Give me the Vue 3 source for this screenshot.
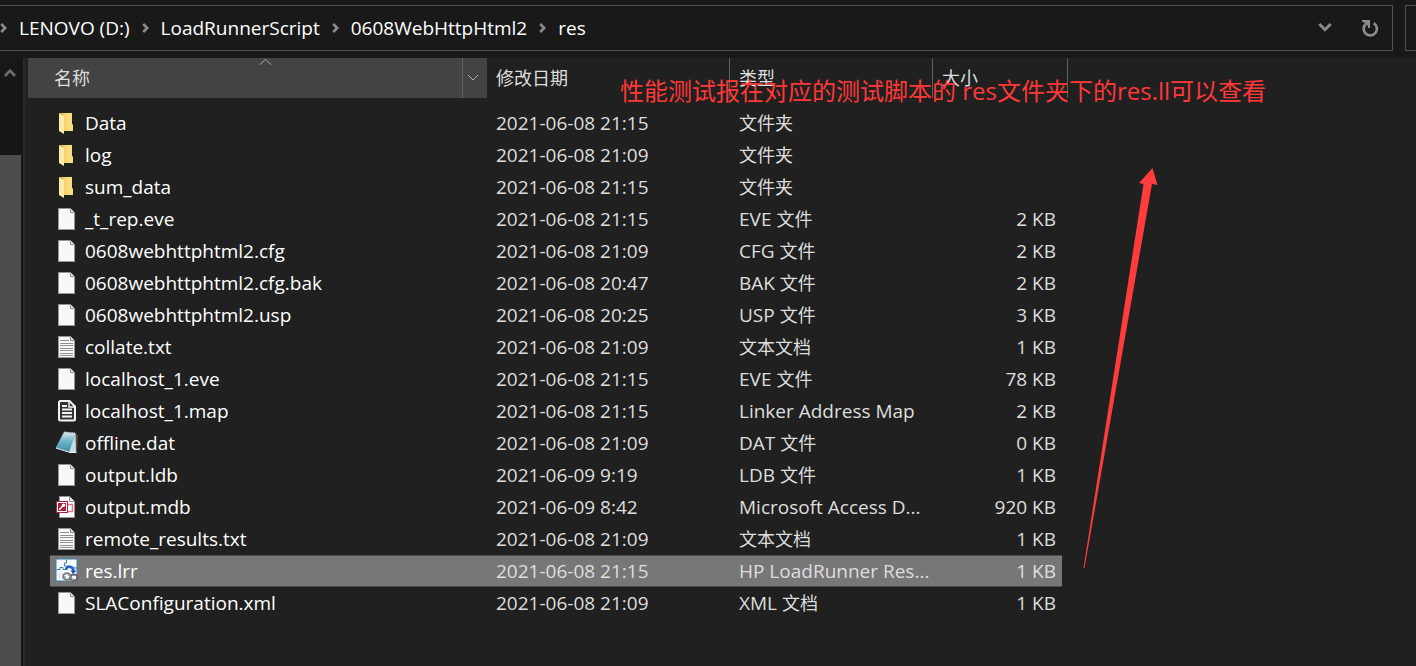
<script setup>
import { ref } from 'vue'

const crumbs = ['LENOVO (D:)', 'LoadRunnerScript', '0608WebHttpHtml2', 'res']

const files = [
  { icon: 'folder', name: 'Data', date: '2021-06-08 21:15', kind: '', cjk: '文件夹', size: '' },
  { icon: 'folder', name: 'log', date: '2021-06-08 21:09', kind: '', cjk: '文件夹', size: '' },
  { icon: 'folder', name: 'sum_data', date: '2021-06-08 21:15', kind: '', cjk: '文件夹', size: '' },
  { icon: 'file', name: '_t_rep.eve', date: '2021-06-08 21:15', kind: 'EVE ', cjk: '文件', size: '2 KB' },
  { icon: 'file', name: '0608webhttphtml2.cfg', date: '2021-06-08 21:09', kind: 'CFG ', cjk: '文件', size: '2 KB' },
  { icon: 'file', name: '0608webhttphtml2.cfg.bak', date: '2021-06-08 20:47', kind: 'BAK ', cjk: '文件', size: '2 KB' },
  { icon: 'file', name: '0608webhttphtml2.usp', date: '2021-06-08 20:25', kind: 'USP ', cjk: '文件', size: '3 KB' },
  { icon: 'text', name: 'collate.txt', date: '2021-06-08 21:09', kind: '', cjk: '文本文档', size: '1 KB' },
  { icon: 'file', name: 'localhost_1.eve', date: '2021-06-08 21:15', kind: 'EVE ', cjk: '文件', size: '78 KB' },
  { icon: 'map', name: 'localhost_1.map', date: '2021-06-08 21:15', kind: 'Linker Address Map', cjk: '', size: '2 KB' },
  { icon: 'dat', name: 'offline.dat', date: '2021-06-08 21:09', kind: 'DAT ', cjk: '文件', size: '0 KB' },
  { icon: 'file', name: 'output.ldb', date: '2021-06-09 9:19', kind: 'LDB ', cjk: '文件', size: '1 KB' },
  { icon: 'mdb', name: 'output.mdb', date: '2021-06-09 8:42', kind: 'Microsoft Access D...', cjk: '', size: '920 KB' },
  { icon: 'text', name: 'remote_results.txt', date: '2021-06-08 21:09', kind: '', cjk: '文本文档', size: '1 KB' },
  { icon: 'lrr', name: 'res.lrr', date: '2021-06-08 21:15', kind: 'HP LoadRunner Res...', cjk: '', size: '1 KB' },
  { icon: 'file', name: 'SLAConfiguration.xml', date: '2021-06-08 21:09', kind: 'XML ', cjk: '文档', size: '1 KB' }
]

const selected = ref('res.lrr')
</script>

<template>
  <div class="explorer">
    <header class="top">
      <nav class="address" aria-label="路径">
        <template v-for="c in crumbs" :key="c">
          <svg class="sep" width="7" height="10" viewBox="0 0 7 10"><path d="M1.2 1L5.2 5L1.2 9" /></svg>
          <button class="crumb" type="button">{{ c }}</button>
        </template>
        <span class="grow"></span>
        <button class="tool" type="button" aria-label="历史记录">
          <svg width="14" height="10" viewBox="0 0 14 10"><path d="M1.3 1L7 6.700L12.700 1" fill="none" stroke="#8b8b8b" stroke-width="3" /></svg>
        </button>
        <button class="tool refresh" type="button" aria-label="刷新">
          <svg width="18" height="18" viewBox="0 0 18 18">
            <path d="M12.700 4.200A6.600 6.600 0 1 1 4.800 5" fill="none" stroke="#8b8b8b" stroke-width="2.700" />
            <path d="M1 2H8V9" fill="none" stroke="#8b8b8b" stroke-width="2" />
            <path d="M2.500 3H7V7Z" fill="#8b8b8b" />
          </svg>
        </button>
      </nav>
      <div class="search"></div>
    </header>

    <div class="body">
      <aside class="track">
        <button class="up" type="button" aria-label="向上滚动">
          <svg width="12" height="10" viewBox="0 0 12 10"><path d="M1 8L6 2.600L11 8" fill="none" stroke="#6e6e6e" stroke-width="2.600" /></svg>
        </button>
        <div class="thumb"></div>
      </aside>

      <main class="pane">
        <table>
          <colgroup>
            <col class="w-edge" /><col class="w-name" /><col class="w-date" />
            <col class="w-type" /><col class="w-size" /><col class="w-tail" />
          </colgroup>
          <thead>
            <tr>
              <th class="name-head" colspan="2">
                <div class="sorted">
                  <button class="head" type="button">名称</button>
                  <svg class="asc" width="13" height="8" viewBox="0 0 13 8"><path d="M1 6.700L6.500 1.200L12 6.700" /></svg>
                  <button class="filter" type="button" aria-label="筛选">
                    <svg width="12" height="8" viewBox="0 0 12 8"><path d="M1 1L6 6L11 1" /></svg>
                  </button>
                </div>
              </th>
              <th><button class="head" type="button">修改日期</button></th>
              <th><button class="head" type="button">类型</button></th>
              <th colspan="2"><button class="head" type="button">大小</button></th>
            </tr>
          </thead>
          <tbody>
            <tr v-for="f in files" :key="f.name" :class="{ on: f.name === selected }" @click="selected = f.name">
              <td class="blank"></td>
              <td class="name">
                <div class="entry">
                  <svg v-if="f.icon === 'folder'" width="24" height="24" viewBox="0 -1 24 24">
                    <path d="M7 1H17V12L18 13V19H7Z" fill="#f7d271" />
                    <path d="M12 1H17V12L18 13V19H12Z" fill="#fbdb7f" />
                    <path d="M4 1L9 4V22L4 19Z" fill="#ffeaa8" />
                    <path d="M4 1H8L9 4Z" fill="#e9bd55" />
                  </svg>
                  <svg v-else-if="f.icon === 'file' || f.icon === 'text'" width="24" height="24" viewBox="0 -1 24 24">
                    <path d="M3.500 .5H15.500L19.500 4.500V21.500H3.500Z" fill="#f6f8f9" stroke="#969696" />
                    <path d="M15.500 .5V4.500H19.500" fill="#e2e2e2" stroke="#8a8a8a" />
                    <path v-if="f.icon === 'text'" d="M5 4.500H14M5 7.500H18M5 9.500H18M5 12.500H18M5 14.500H18M5 17.500H18M5 19.500H18" stroke="#8f8f8f" />
                  </svg>
                  <svg v-else-if="f.icon === 'map'" width="24" height="24" viewBox="0 -1 24 24">
                    <path d="M5 1H14.500L20 6.500V19A1.500 1.500 0 0 1 18.500 20.500H5.500A1.500 1.500 0 0 1 4 19V2Z" fill="#333" stroke="#f4f4f4" stroke-width="2" stroke-linejoin="round" />
                    <path d="M14 2V7H19" fill="none" stroke="#f4f4f4" stroke-width="1.500" />
                    <path d="M7 6H12M7 9.500H17M7 13H17M7 16.500H17" stroke="#f4f4f4" stroke-width="2" />
                  </svg>
                  <svg v-else-if="f.icon === 'dat'" width="24" height="24" viewBox="0 -1 24 24">
                    <defs>
                      <linearGradient id="pad" x1="0" y1="0" x2="0" y2="1">
                        <stop offset="0" stop-color="#d9eef2" /><stop offset=".45" stop-color="#6fb4c6" /><stop offset="1" stop-color="#3f8da5" />
                      </linearGradient>
                    </defs>
                    <path d="M20 1L23 3L22 20L18 21Z" fill="#5b4935" />
                    <path d="M9 0L20.500 1L15 20L.5 16Z" fill="url(#pad)" />
                    <path d="M20.500 1L21 20.500L14 20.500Z" fill="#c3dfe4" />
                    <path d="M1 16L15 20.500L21.500 20.500" fill="none" stroke="#e9f5f6" />
                    <path d="M9 .2L20.500 1.200" stroke="#c9cdcd" stroke-width="1.500" stroke-dasharray="1 1" />
                  </svg>
                  <svg v-else-if="f.icon === 'mdb'" width="24" height="24" viewBox="0 -1 24 24">
                    <path d="M4.500 .5H14.500L19.500 5.500V21.500H4.500Z" fill="#fff" stroke="#969696" />
                    <path d="M14.500 .5V5.500H19.500" fill="#eee" stroke="#8a8a8a" />
                    <path d="M13 8.500H17.500V15.500H13" fill="none" stroke="#d8768a" stroke-width="1.500" />
                    <rect x="1.500" y="5.500" width="11" height="11" fill="#fff" stroke="#a4243e" />
                    <rect x="3" y="7" width="8" height="8" fill="#a4243e" />
                    <circle cx="8.500" cy="9.300" r="1.700" fill="#fff" />
                    <path d="M7.800 10L4.200 13.800" stroke="#fff" stroke-width="1.400" />
                  </svg>
                  <svg v-else width="24" height="24" viewBox="0 0 24 24">
                    <rect x="1" y="0" width="21" height="22" rx="1" fill="#f4fafd" stroke="#3e83ab" />
                    <path d="M11.500 .5V4H9.500V7H11.500V11M1.500 10.500H5V8.500H8V10.500H11.500M17 9H22M8 18H11" fill="none" stroke="#3e83ab" />
                    <path d="M4.500 14V19M7.500 14V19" stroke="#bfd6e4" />
                    <path d="M11 10.500C12 6.500 18 6.500 18.500 12" fill="none" stroke="#2b5fc9" stroke-width="2.600" />
                    <path d="M15.500 11.500H21.500L18 15Z" fill="#2451b5" />
                    <ellipse cx="12" cy="17.500" rx="3.800" ry="3.200" fill="none" stroke="#808080" stroke-width="2" />
                    <ellipse cx="18.800" cy="18.500" rx="3.600" ry="3" fill="none" stroke="#666" stroke-width="2" />
                    <path d="M13 15L18 21" stroke="#9a9a9a" stroke-width="1.500" />
                  </svg>
                  <span>{{ f.name }}</span>
                </div>
              </td>
              <td>{{ f.date }}</td>
              <td>{{ f.kind }}<span class="cjk">{{ f.cjk }}</span></td>
              <td class="size">{{ f.size }}</td>
              <td class="blank"></td>
            </tr>
          </tbody>
        </table>
      </main>
    </div>

    <p class="note">性能测试报在对应的测试脚本的 res文件夹下的res.ll可以查看</p>
    <svg class="arrow" width="72" height="402" viewBox="0 0 72 402">
      <path d="M.5 400L60.500 16L56 15L69.500 0L74.500 17L69 16L1.500 400Z" fill="#ff3b3b" />
    </svg>
  </div>
</template>

<style>
body {
  background: #202020;
}
</style>

<style scoped>
.explorer {
  position: relative;
  display: flex;
  flex-direction: column;
  min-height: 100vh;
  overflow: hidden;
  background: #202020;
  color: #dedede;
  font: 19px/24px "Open Sans", "Noto Sans CJK SC", sans-serif;
}
button {
  margin: 0;
  padding: 0;
  border: 0;
  background: none;
  color: inherit;
  font: inherit;
}
.top {
  display: flex;
  gap: 12px;
  padding: 5px 0 7px;
  background: #191919;
}
.address {
  flex: 1;
  display: flex;
  align-items: center;
  height: 44px;
  border: 1px solid #535353;
  border-left: 0;
}
.sep {
  flex: none;
  margin: 0 12px;
  fill: none;
  stroke: #8b8b8b;
  stroke-width: 2.6;
}
.sep:first-child {
  margin-left: 0;
}
.crumb {
  color: #fff;
  white-space: nowrap;
}
.grow {
  flex: 1;
}
.tool {
  display: flex;
  align-items: center;
  justify-content: center;
  width: 45px;
  height: 44px;
}
.refresh {
  border-left: 1px solid #151515;
}
.search {
  width: 10px;
  height: 44px;
  border: 1px solid #535353;
  border-right: 0;
}
.body {
  flex: 1;
  display: flex;
}
.track {
  display: flex;
  flex-direction: column;
  width: 21px;
  padding-right: 2px;
  border-right: 2px solid #2b2b2b;
  background: #171717;
}
.up {
  display: flex;
  justify-content: center;
  align-items: flex-start;
  width: 19px;
  height: 97px;
  padding-top: 10px;
}
.thumb {
  flex: 1;
  width: 21px;
  background: #4d4d4d;
}
.pane {
  flex: 1;
  padding-left: 3px;
}
table {
  width: 1040px;
  table-layout: fixed;
  border-collapse: separate;
  border-spacing: 0;
}
.w-edge { width: 22px; }
.w-name { width: 437px; }
.w-date { width: 243px; }
.w-type { width: 203px; }
.w-size { width: 129px; }
.w-tail { width: 6px; }
th {
  height: 40px;
  padding: 0 0 0 9px;
  border-right: 1px solid #5f5f5f;
  font-size: 18px;
  font-weight: 400;
  text-align: left;
}
.name-head {
  padding: 0;
  border-right: 0;
  background: #434343;
}
.sorted {
  position: relative;
  display: flex;
  justify-content: space-between;
  height: 40px;
  padding-left: 26px;
}
.asc {
  position: absolute;
  top: 0;
  left: 231px;
  fill: none;
  stroke: #b0b0b0;
}
.filter {
  display: flex;
  align-items: center;
  width: 25px;
  padding-left: 4px;
  border-left: 1px solid #636363;
}
.filter svg {
  fill: none;
  stroke: #b0b0b0;
}
tbody::before {
  content: "";
  display: block;
  height: 9px;
}
td {
  height: 32px;
  padding: 0 0 0 9px;
  white-space: nowrap;
}
.blank {
  padding: 0;
}
.name {
  padding-left: 5px;
  color: #fff;
}
.entry {
  display: flex;
  align-items: center;
  gap: 6px;
}
.entry svg {
  flex: none;
  overflow: visible;
}
.cjk {
  font-size: 18px;
}
.size {
  padding-right: 6px;
  text-align: right;
}
.on td:not(.blank) {
  background: #777;
  box-shadow: inset 0 1px #4a4a4a, inset 0 -1px #4a4a4a;
}
.note {
  position: absolute;
  top: 76px;
  left: 620px;
  margin: 0;
  color: #ff3838;
  font-size: 24px;
  line-height: 30px;
  white-space: nowrap;
}
.arrow {
  position: absolute;
  top: 168px;
  left: 1083px;
  overflow: visible;
}
</style>
